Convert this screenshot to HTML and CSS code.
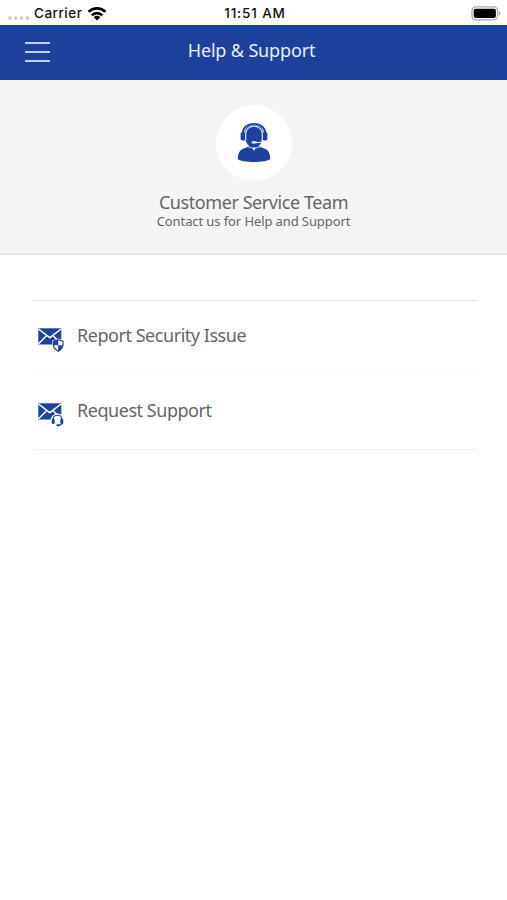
FILE: index.html
```html
<!DOCTYPE html>
<html lang="en">
<head>
<meta charset="utf-8">
<title>Help &amp; Support</title>
<link rel="stylesheet" href="styles.css">
</head>
<body>
<div class="status">
  <div class="status-left">
    <svg class="signal" width="24" height="6" viewBox="0 0 24 6"><g fill="#c4c4c4"><circle cx="2" cy="3" r="1.7"/><circle cx="7.800" cy="3" r="1.700"/><circle cx="13.600" cy="3" r="1.700"/><circle cx="19.400" cy="3" r="1.700"/></g></svg>
    <span class="carrier">Carrier</span>
    <svg class="wifi" width="20" height="15" viewBox="0 0 20 15"><g fill="none" stroke="#000" stroke-width="2.7"><path d="M1.600 5.800a12 12 0 0 1 16.800 0"/><path d="M4.800 9.200a7.400 7.400 0 0 1 10.400 0"/></g><path d="M6.700 11.200a4.700 4.700 0 0 1 6.600 0L10 14.600z"/></svg>
  </div>
  <time class="clock">11:51 AM</time>
  <svg class="battery" width="30" height="15" viewBox="0 0 30 15"><rect x="1" y=".9" width="25.600" height="13" rx="4" fill="#fff" stroke="#aaa" stroke-width="1.300"/><rect x="2.700" y="2.700" width="22.200" height="9.400" rx="2"/><path d="M28 5.300q1.400.7 1.400 2.100T28 9.500z" fill="#999"/></svg>
</div>
<header class="bar">
  <button class="menu" aria-label="Menu"><i></i><i></i><i></i></button>
  <h1>Help &amp; Support</h1>
</header>
<section class="hero">
  <div class="avatar">
    <svg width="34" height="42" viewBox="0 0 34 42">
      <g fill="#1c429b">
        <path d="M8 11Q8 3 17 3t9 8v5q-1 6-5.500 9h-7Q9 22 8 16z"/>
        <rect x="3.600" y="10" width="5" height="8.500" rx="1.800"/><rect x="25.400" y="10" width="5" height="8.500" rx="1.800"/>
        <path d="M.8 37c0-6 2.200-9.400 6-10.600L12.500 24h9l5.700 2.400c3.800 1.200 6 4.600 6 10.600-3.200 4-29.200 4-32.400 0z"/>
      </g>
      <path d="M5.800 11C6.500-1.300 27.500-1.300 28.200 11" fill="none" stroke="#1c429b" stroke-width="1.800"/>
      <path d="M8.700 18v-6c0-10.500 16.600-10.500 16.600 0v6q0 2.500-3 2.500h-4.500" fill="none" stroke="#dde6f8" stroke-width="1.200"/>
      <rect x="14.500" y="19.200" width="5.500" height="2.400" rx="1.200" fill="#dde6f8"/>
      <path d="M9.500 24.500q6 1 7.500 2.500 1.500-1.500 7.500-2.500" fill="none" stroke="#fff" stroke-width=".8"/>
      <path d="M15.500 25.500h3L17 29z" fill="#fff"/>
    </svg>
  </div>
  <h2>Customer Service Team</h2>
  <p>Contact us for Help and Support</p>
</section>
<main class="list">
  <a class="row">
    <svg width="28" height="28" viewBox="0 0 28 28">
      <rect x="1.300" y="3.300" width="23" height="16.200" fill="#1c429b"/>
      <path d="M1.500 4l11.300 8.700L24.100 4M1.500 18.700l8-8M24.100 18.700l-8-8" fill="none" stroke="#fff" stroke-width="1.500"/>
      <path d="M21.200 13.400l6 2.200v4.500c0 3.500-3 6-6 7.600-3-1.600-6-4.100-6-7.600v-4.500z" fill="#fff"/>
      <path d="M21.200 14.700l4.800 1.600v3.800c0 2.800-2.400 4.800-4.800 6.200-2.400-1.400-4.800-3.400-4.800-6.200v-3.800z" fill="#fff" stroke="#1c429b" stroke-width="1.200"/>
      <path d="M21.200 15v5.200h-4.600v-3.600zM21.200 20.200h4.700c-.2 3-2.300 4.700-4.700 6z" fill="#1c429b"/>
    </svg>
    <span>Report Security Issue</span>
  </a>
  <a class="row">
    <svg width="28" height="28" viewBox="0 0 28 28">
      <rect x="1.300" y="3.300" width="23" height="16.200" fill="#1c429b"/>
      <path d="M1.500 4l11.300 8.700L24.100 4M1.500 18.700l8-8M24.100 18.700l-8-8" fill="none" stroke="#fff" stroke-width="1.500"/>
      <circle cx="20.500" cy="20.300" r="6.800" fill="#fff"/>
      <path d="M16.200 20.500v-1.300c0-5.300 8.600-5.300 8.600 0v1.300M25 22.500c0 2-1.200 2.800-3.800 2.800" fill="none" stroke="#1c429b" stroke-width="1.200"/>
      <g fill="#1c429b"><rect x="14.700" y="18.700" width="3" height="5.300" rx="1.200"/><rect x="23.300" y="18.700" width="3" height="5.300" rx="1.200"/><rect x="19.300" y="24.200" width="3.400" height="2" rx="1"/></g>
    </svg>
    <span>Request Support</span>
  </a>
</main>
</body>
</html>
```
FILE: styles.css
```css
* { box-sizing: border-box; }
body { margin: 0; min-height: 900px; background: #fff; font-family: "Noto Sans", sans-serif; color: #666; }
h1, h2, p { margin: 0; font-weight: 400; white-space: nowrap; }
svg { display: block; flex: none; }
.status { height: 25px; display: grid; grid-template-columns: 1fr auto 1fr; align-items: center; padding: 1px 6px 0 8px; font: 500 13.5px/24px Inter, sans-serif; color: #111; }
.status-left { display: flex; align-items: center; }
.signal { margin: 9px 2px 0 0; }
.carrier { letter-spacing: .5px; }
.wifi { margin-left: 5px; }
.clock { font-size: 13.5px; letter-spacing: .85px; margin-right: -1px; }
.battery { justify-self: end; }
.bar { height: 55px; background: #1c429b; display: grid; grid-template-columns: 50px 1fr 54px; align-items: center; }
.menu { margin: 0 0 2px 25px; padding: 0; border: 0; background: none; width: 25px; display: flex; flex-direction: column; gap: 7px; }
.menu i { height: 2px; background: #bdd3f8; }
.bar h1 { color: #e8effc; font-size: 18px; letter-spacing: -.15px; line-height: 24px; text-align: center; padding-bottom: 6px; }
.hero { height: 175px; background: #f5f5f5; border-bottom: 1px solid #dedede; padding-top: 25px; display: flex; flex-direction: column; align-items: center; }
.avatar { width: 76px; height: 76px; border-radius: 50%; background: #fff; display: flex; align-items: center; justify-content: center; }
.hero h2 { font-size: 18px; letter-spacing: -.43px; line-height: 20px; margin-top: 11px; }
.hero p { font-size: 13px; letter-spacing: -.1px; line-height: 18px; }
.list { margin: 45px 30px 0 32px; border-top: 1px solid #e4e4e4; }
.row { height: 75px; margin-left: 2px; padding: 0 0 0 3px; display: flex; align-items: center; border-bottom: 1px solid #fbfbfb; }
.row:last-child { height: 74px; border-color: #f0f0f0; }
.row svg { margin-top: 2px; }
.row span { margin-left: 12px; padding-bottom: 6px; font-size: 18px; letter-spacing: -.46px; line-height: 24px; white-space: nowrap; }
```
